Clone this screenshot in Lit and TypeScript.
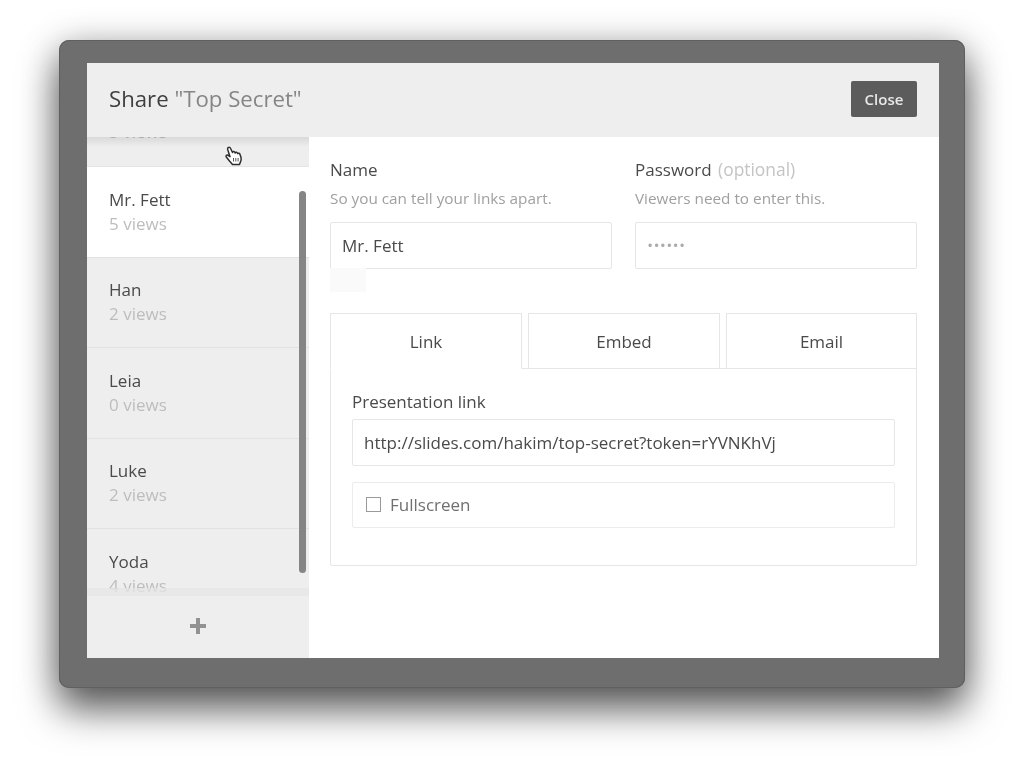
import { LitElement, html, css } from "lit";
import { customElement } from "lit/decorators.js";

const people = [
  { name: "Han", views: "2 views" },
  { name: "Leia", views: "0 views" },
  { name: "Luke", views: "2 views" },
  { name: "Yoda", views: "4 views" },
];

@customElement("app-root")
export class AppRoot extends LitElement {
  static styles = css`
    :host {
      display: block;
      width: 1024px;
      height: 766px;
      overflow: hidden;
      background: #fff;
      font-family: "Open Sans", "Noto Sans", sans-serif;
      color: #4a4a4a;
    }
    * { box-sizing: border-box; }
    .page { padding: 40px 59px 0; }
    .window {
      width: 906px;
      height: 648px;
      padding: 23px 26px 30px 28px;
      background: #6e6e6e;
      border-radius: 10px;
      box-shadow: inset 0 0 0 1px #5f5f5f, 0 22px 38px rgba(0,0,0,.58), 0 4px 36px rgba(0,0,0,.26);
    }
    .modal {
      position: relative;
      height: 100%;
      background: #fff;
      display: flex;
      flex-direction: column;
      filter: blur(.45px);
    }
    header {
      height: 74px;
      flex: none;
      background: #eeeeee;
      display: flex;
      align-items: center;
      justify-content: space-between;
      padding: 0 22px 2px;
    }
    h1 { margin: 0 0 2px; font-size: 22.2px; font-weight: 400; color: #3f3f3f; }
    h1 span { color: #858585; }
    .close {
      width: 66px;
      height: 36px;
      background: #5c5c5c;
      color: #e8e8e8;
      border-radius: 2px;
      font-size: 15px;
      font-weight: 600;
      display: flex;
      align-items: center;
      justify-content: center;
    }
    .body { flex: 1; display: flex; min-height: 0; }
    aside {
      position: relative;
      width: 222px;
      flex: none;
      background: #eeeeee;
      display: flex;
      flex-direction: column;
      overflow: hidden;
    }
    .list { flex: 1; min-height: 0; overflow: hidden; position: relative; }
    .list::before {
      content: "";
      position: absolute;
      left: 0; right: 0; top: 0;
      height: 10px;
      background: linear-gradient(rgba(0,0,0,.09), rgba(0,0,0,0));
      z-index: 1;
    }
    .list::after {
      content: "";
      position: absolute;
      left: 0; right: 0; bottom: 0;
      height: 8px;
      background: #e6e6e6;
      opacity: .75;
    }
    .stub { height: 30px; position: relative; overflow: hidden; border-bottom: 1px solid #e4e4e4; }
    .stub span { position: absolute; left: 22px; top: -17px; font-size: 17px; color: #bbb; line-height: 24px; }
    .item {
      height: 90.5px;
      padding: 20.5px 22px 0;
      border-bottom: 1px solid #e2e2e2;
      font-size: 17px;
      line-height: 24px;
    }
    .item.active { background: #fff; }
    .item .n { color: #4a4a4a; }
    .item .v { color: #bdbdbd; }
    .add {
      height: 62px;
      flex: none;
      display: flex;
      align-items: center;
      justify-content: center;
      padding-bottom: 2px;
    }
    .scrollbar {
      position: absolute;
      left: 212px;
      top: 54px;
      width: 7px;
      height: 382px;
      border-radius: 4px;
      background: #858585;
    }
    .cursor { position: absolute; left: 138px; top: 9px; z-index: 2; }
    main { position: relative; flex: 1; padding: 21px 22px 0 21px; }
    .cols { display: grid; grid-template-columns: 282px 282px; gap: 23px; }
    .label { font-size: 17px; line-height: 24px; height: 24px; color: #4a4a4a; }
    .label em { font-style: normal; color: #c4c4c4; margin-left: 2px; font-size: 17.4px; line-height: 1; }
    .sub { font-size: 15.3px; line-height: 24px; color: #a0a0a0; margin-top: 4px; }
    .input {
      height: 47px;
      border: 1px solid #e6e6e6;
      border-radius: 2px;
      background: #fff;
      padding: 0 11px;
      display: flex;
      align-items: center;
      font-size: 17px;
      color: #4a4a4a;
    }
    .cols .input { margin-top: 12px; }
    .dots { color: #aaa; font-size: 12px; letter-spacing: 2.2px; font-family: "Liberation Sans", sans-serif; margin-left: 1px; }
    .ghost { position: absolute; left: 21px; top: 131px; width: 36px; height: 24px; background: #fafafa; }
    .tabs { display: flex; gap: 6px; margin-top: 44px; }
    .tab {
      width: 192px;
      height: 56px;
      border: 1px solid #e6e6e6;
      display: flex;
      align-items: center;
      justify-content: center;
      font-size: 17px;
      color: #4a4a4a;
    }
    .tab.on { border-bottom-color: #fff; position: relative; z-index: 1; }
    .tab:last-child { width: 191px; }
    .panel {
      margin-top: -1px;
      height: 198px;
      border: 1px solid #e6e6e6;
      padding: 21px 21px 0;
      border-radius: 0 0 2px 2px;
    }
    .panel .label { margin-bottom: 5px; }
    .check {
      margin-top: 16px;
      height: 46px;
      border: 1px solid #ececec;
      border-radius: 2px;
      display: flex;
      align-items: center;
      padding: 0 0 2px 13px;
      font-size: 17px;
      color: #707070;
      gap: 9px;
    }
    .box { width: 15px; height: 15px; border: 1px solid #9a9a9a; margin-top: 1px; }
  `;

  render() {
    return html`
      <div class="page">
        <div class="window">
          <div class="modal">
            <header>
              <h1>Share <span>"Top Secret"</span></h1>
              <div class="close">Close</div>
            </header>
            <div class="body">
              <aside>
                <div class="list">
                  <div class="stub"><span>5 views</span></div>
                  <div class="item active">
                    <div class="n">Mr. Fett</div>
                    <div class="v">5 views</div>
                  </div>
                  ${people.map(
                    (p) => html`<div class="item">
                      <div class="n">${p.name}</div>
                      <div class="v">${p.views}</div>
                    </div>`
                  )}
                </div>
                <div class="add">
                  <svg width="18" height="18" viewBox="0 0 18 18">
                    <path d="M7 1h4v6h6v4h-6v6H7v-6H1V7h6z" fill="#929292"></path>
                  </svg>
                </div>
                <div class="scrollbar"></div>
                <svg class="cursor" width="18" height="21" viewBox="0 0 18 21">
                  <path
                    d="M3.2 1.6c.9-.6 1.9-.2 2.3.7l2 4.2c.1-1 1.600-1.300 2.200-.3l.5.800c.3-.9 1.600-1 2.100-.2l.5.800c.5-.7 1.600-.5 2 .3l1 2.800c.6 1.900.3 3.900-.4 5.400l-.9 2.400H7.500l-3-3.500L1.300 11c-.6-1 .3-2.200 1.400-1.800l2.300 1.500L2.700 3.500c-.2-.8 0-1.500.5-1.900z"
                    fill="#fff"
                    stroke="#2e2e2e"
                    stroke-width="1.500"
                    stroke-linejoin="round"
                  ></path>
                  <path d="M8.500 12v3.500M10.800 12v3.500M13.100 12v3.500" stroke="#555" stroke-width="1"></path>
                </svg>
              </aside>
              <main>
                <div class="cols">
                  <div>
                    <div class="label">Name</div>
                    <div class="sub">So you can tell your links apart.</div>
                    <div class="input">Mr. Fett</div>
                  </div>
                  <div>
                    <div class="label">Password <em>(optional)</em></div>
                    <div class="sub">Viewers need to enter this.</div>
                    <div class="input"><span class="dots">••••••</span></div>
                  </div>
                </div>
                <div class="ghost"></div>
                <div class="tabs">
                  <div class="tab on">Link</div>
                  <div class="tab">Embed</div>
                  <div class="tab">Email</div>
                </div>
                <div class="panel">
                  <div class="label">Presentation link</div>
                  <div class="input">http://slides.com/hakim/top-secret?token=rYVNKhVj</div>
                  <div class="check"><span class="box"></span>Fullscreen</div>
                </div>
              </main>
            </div>
          </div>
        </div>
      </div>
    `;
  }
}
